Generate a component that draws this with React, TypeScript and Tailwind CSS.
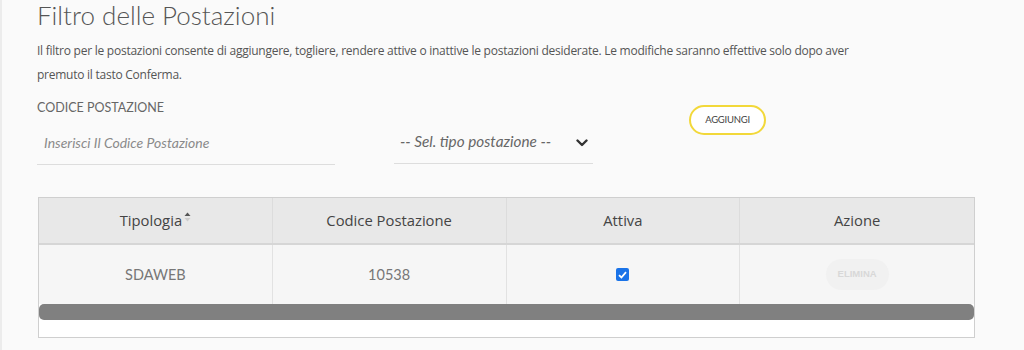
import React from "react";

export default function App() {
  return (
    <div className="w-[1024px] h-[350px] bg-[#fafafa] border-l-2 border-[#ececec] overflow-hidden" style={{ fontFamily: "'Open Sans', sans-serif" }}>
      <div className="pl-[35px] pr-[49px]">
        <h1 className="text-[26px] leading-[30px] font-light text-[#555]" style={{ fontFamily: "Lato, sans-serif" }}>
          Filtro delle Postazioni
        </h1>
        <p className="mt-[9px] text-[12px] leading-[24px] tracking-[-0.25px] text-[#555] w-[850px]">
          Il filtro per le postazioni consente di aggiungere, togliere, rendere attive o inattive le postazioni desiderate. Le modifiche saranno effettive solo dopo aver premuto il tasto Conferma.
        </p>
        <div className="mt-[13px] flex items-start">
          <div className="w-[298px]">
            <div className="text-[12.5px] leading-[16px] text-[#666] uppercase" style={{ fontFamily: "Lato, sans-serif" }}>
              Codice Postazione
            </div>
            <div className="mt-[8px] h-[41px] border-b border-[#ddd] flex items-center pl-[7px] pb-[3px]">
              <span className="italic text-[14px] text-[#8a8a8a]" style={{ fontFamily: "Lato, sans-serif" }}>Inserisci Il Codice Postazione</span>
            </div>
          </div>
          <div className="ml-[59px] mt-[23px] w-[199px] h-[41px] border-b border-[#ddd] flex items-center justify-between pl-[6px] pr-[5px]">
            <span className="italic text-[15.3px] text-[#666] -mt-[3px]" style={{ fontFamily: "Lato, sans-serif" }}>-- Sel. tipo postazione --</span>
            <svg width="12" height="8" viewBox="0 0 12 8">
              <path d="M1.5 1.5 L6 6 L10.5 1.5" fill="none" stroke="#333" strokeWidth="2.4" strokeLinecap="round" strokeLinejoin="round" />
            </svg>
          </div>
          <button className="ml-[96px] mt-[5px] w-[77px] h-[30px] rounded-full border-2 border-[#f2d83a] bg-white text-[9.5px] text-[#444] flex items-center justify-center tracking-tight" style={{ fontFamily: "Lato, sans-serif" }}>
            AGGIUNGI
          </button>
        </div>
        <div className="mt-[32px] ml-[1px] w-[937px] h-[141px] border border-[#cfcfcf] bg-white">
          <div className="grid grid-cols-4 h-[47px] bg-[#e8e8e8] border-b-2 border-[#d6d6d6] text-[14.8px] text-[#444]">
            <div className="flex items-center justify-center border-r border-[#dcdcdc]">
              <span>Tipologia</span>
              <svg width="7" height="10" viewBox="0 0 7 10" className="ml-[2px] -mt-[8px]">
                <path d="M0.5 4 L3.5 0.5 L6.5 4 Z" fill="#555" />
                <path d="M0.5 6 L3.5 9.5 L6.5 6 Z" fill="#ccc" />
              </svg>
            </div>
            <div className="flex items-center justify-center border-r border-[#dcdcdc]">Codice Postazione</div>
            <div className="flex items-center justify-center border-r border-[#dcdcdc]">Attiva</div>
            <div className="flex items-center justify-center">Azione</div>
          </div>
          <div className="grid grid-cols-4 h-[59px] bg-[#f6f6f6] text-[14.5px] text-[#777]" style={{ fontFamily: "Lato, sans-serif" }}>
            <div className="flex items-center justify-center border-r border-[#e2e2e2]">SDAWEB</div>
            <div className="flex items-center justify-center border-r border-[#e2e2e2]">10538</div>
            <div className="flex items-center justify-center border-r border-[#e2e2e2]">
              <span className="w-[13px] h-[13px] rounded-[2px] bg-[#1a73e8] flex items-center justify-center">
                <svg width="9" height="8" viewBox="0 0 9 8">
                  <path d="M1 4.2 L3.4 6.5 L8 1.2" fill="none" stroke="white" strokeWidth="1.8" />
                </svg>
              </span>
            </div>
            <div className="flex items-center justify-center">
              <span className="px-[12px] py-[8px] rounded-full bg-[#f1f1f1] text-[9.5px] font-bold text-[#d8d8d8]" style={{ fontFamily: "'Liberation Sans', sans-serif" }}>ELIMINA</span>
            </div>
          </div>
          <div className="h-[16px] bg-[#808080] rounded-[5px]" />
        </div>
      </div>
    </div>
  );
}
